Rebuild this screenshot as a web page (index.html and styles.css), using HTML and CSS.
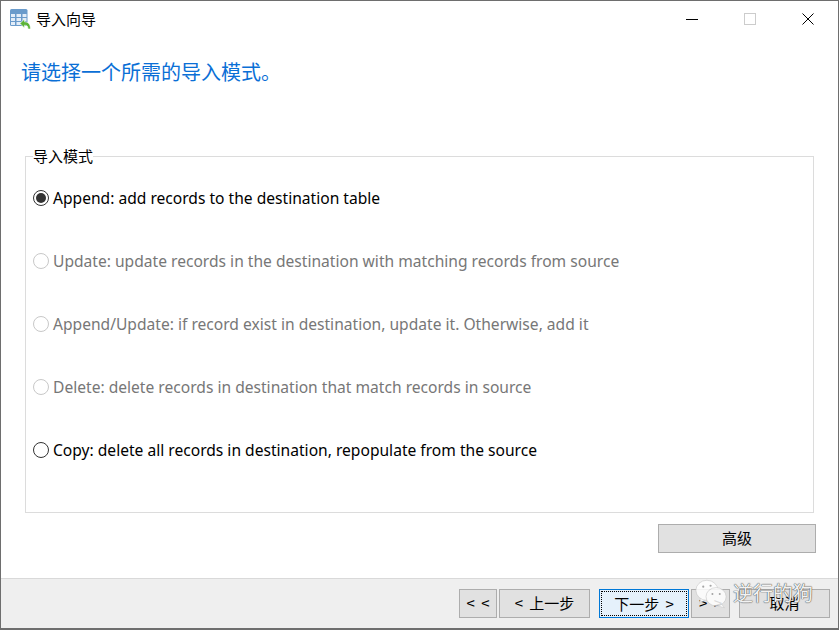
FILE: index.html
```html
<!DOCTYPE html>
<html lang="zh">
<head>
<meta charset="utf-8">
<title>导入向导</title>
<link rel="stylesheet" href="styles.css">
</head>
<body>
<div class="window">
  <header class="titlebar">
    <svg class="app-icon" width="21" height="21" viewBox="0 0 21 21">
      <rect x="0" y="0" width="17.500" height="17" rx="1.500" fill="#6a9bcb"/>
      <rect x="1" y="5" width="4" height="3" fill="#e3edf8"/><rect x="6.500" y="5" width="4.500" height="3" fill="#e3edf8"/><rect x="12.500" y="5" width="4" height="3" fill="#e3edf8"/>
      <rect x="1" y="9" width="4" height="3" fill="#e3edf8"/><rect x="6.500" y="9" width="4.500" height="3" fill="#e3edf8"/><rect x="12.500" y="9" width="4" height="3" fill="#e3edf8"/>
      <rect x="1" y="13" width="4" height="3" fill="#e3edf8"/><rect x="6.500" y="13" width="4.500" height="3" fill="#e3edf8"/>
      <path d="M10 14.500 L14.500 10 V12.800 C18 12.800 20.500 14.800 20.500 20 H18 C18 17 16.800 16.200 14.500 16.200 V19 Z" fill="#5cb338" stroke="#fff" stroke-width=".6"/>
    </svg>
    <span class="title">导入向导</span>
    <div class="controls">
      <svg class="ctl" width="12" height="12" viewBox="0 0 12 12"><path d="M0 6.500H12" stroke="#000"/></svg>
      <svg class="ctl" width="12" height="12" viewBox="0 0 12 12"><rect x=".5" y=".5" width="11" height="11" fill="none" stroke="#ccc"/></svg>
      <svg class="ctl" width="12" height="12" viewBox="0 0 12 12"><path d="M.5 .5L11.500 11.500M11.500 .5L.5 11.500" stroke="#000"/></svg>
    </div>
  </header>
  <main class="content">
    <h1 class="heading">请选择一个所需的导入模式。</h1>
    <fieldset class="group">
      <legend class="legend">导入模式</legend>
      <label class="option"><span class="radio checked"></span>Append: add records to the destination table</label>
      <label class="option disabled"><span class="radio"></span>Update: update records in the destination with matching records from source</label>
      <label class="option disabled"><span class="radio"></span>Append/Update: if record exist in destination, update it. Otherwise, add it</label>
      <label class="option disabled"><span class="radio"></span>Delete: delete records in destination that match records in source</label>
      <label class="option"><span class="radio"></span>Copy: delete all records in destination, repopulate from the source</label>
    </fieldset>
    <div class="advanced-row"><button class="btn advanced">高级</button></div>
  </main>
  <footer class="footer">
    <button class="btn first">&lt; &lt;</button>
    <button class="btn prev">&lt; 上一步</button>
    <button class="btn next"><span class="focus">下一步 &gt;</span></button>
    <button class="btn last">&gt; &gt;</button>
    <button class="btn cancel">取消</button>
    <div class="watermark">
      <svg class="wm-icon" width="33" height="30" viewBox="0 0 36 32">
        <path d="M6 20L5 26L12 22Z" fill="#fff" stroke="#bbb" stroke-width=".5"/>
        <ellipse cx="13" cy="12" rx="12" ry="11" fill="#fff" stroke="#c4c4c4" stroke-width=".7"/>
        <path d="M29 27L32 31L25 29Z" fill="#fff" stroke="#bbb" stroke-width=".5"/>
        <ellipse cx="23" cy="19" rx="11" ry="10" fill="#fff" stroke="#c4c4c4" stroke-width=".7"/>
        <circle cx="9" cy="8" r="1.200" fill="#999"/><circle cx="17" cy="7" r="1.200" fill="#999"/>
        <circle cx="19" cy="16" r="1.100" fill="#999"/><circle cx="27" cy="16" r="1.100" fill="#999"/>
      </svg>
      <span class="wm-text">逆行的狗</span>
    </div>
  </footer>
</div>
</body>
</html>
```
FILE: styles.css
```css
* { box-sizing: border-box; }
html, body { margin: 0; padding: 0; }
body { width: 839px; height: 630px; background: #fff; font-family: "Noto Sans", "Noto Sans CJK SC", sans-serif; overflow: hidden; }
.window { width: 839px; height: 630px; border: 1px solid #6e6e6e; border-width: 1px 1px 2px 1px; display: flex; flex-direction: column; background: #fff; }
.titlebar { height: 38px; display: flex; align-items: center; padding: 0 0 2px 9px; flex: none; }
.app-icon { flex: none; }
.title { margin: -2px 0 0 5px; font: 15px "Noto Sans CJK SC", sans-serif; color: #000; }
.controls { margin-left: auto; display: flex; gap: 46px; padding-right: 24px; }
.ctl { display: block; }
.content { flex: 1; display: flex; flex-direction: column; padding: 0 22px 0 20px; min-height: 0; }
.heading { margin: 19px 0 0; font: 400 20px/28px "Noto Sans CJK SC", sans-serif; color: #0a6fd6; height: 49px; }
.group { margin: 40px 0 0 4px; padding: 0 0 0 7px; width: 789px; height: 366px; border: 1px solid #dcdcdc; min-inline-size: 0; }
.legend { padding: 0; margin-left: 0; font: 15px/18px "Noto Sans CJK SC", sans-serif; color: #000; }
.option { display: flex; align-items: center; height: 63px; font-size: 15.600px; color: #000; }
.option:first-of-type { margin-top: 1px; }
.option.disabled { color: #777; }
.radio { width: 16px; height: 16px; border-radius: 50%; border: 1.500px solid #333; margin-right: 4px; flex: none; background: #fff; position: relative; }
.radio.checked::after { content: ""; position: absolute; inset: 2px; border-radius: 50%; background: #333; }
.disabled .radio { border-color: #c8c8c8; }
.advanced-row { display: flex; justify-content: flex-end; margin-top: 11px; }
.btn { font: 15px "Noto Sans CJK SC", sans-serif; word-spacing: 3px; color: #000; background: #e1e1e1; border: 1px solid #adadad; height: 29px; padding: 0 0 2px; display: flex; align-items: center; justify-content: center; }
.advanced { width: 158px; }
.footer { height: 50px; flex: none; position: relative; background: #efefef; border-top: 1px solid #d9d9d9; display: flex; align-items: flex-start; padding: 10px 0 0 458px; }
.first { width: 38px; margin-right: 2px; }
.prev { width: 91px; margin-right: 9px; }
.next { width: 90px; margin-right: 2px; background: #e5f1fb; border-color: #0078d7; padding: 1px; }
.focus { width: 100%; height: 100%; padding-bottom: 1px; display: flex; align-items: center; justify-content: center; border: 1px dotted #000; }
.last { width: 39px; margin-right: 9px; }
.cancel { width: 91px; }
.watermark { position: absolute; left: 694px; top: 0; display: flex; align-items: flex-start; gap: 5px; }
.wm-icon { opacity: .85; }
.wm-text { font: 20px/30px "Noto Sans CJK SC", sans-serif; color: #f2f2f2; margin-top: -1px; text-shadow: 0 0 1px #444, 0 0 1px #444; }
```
